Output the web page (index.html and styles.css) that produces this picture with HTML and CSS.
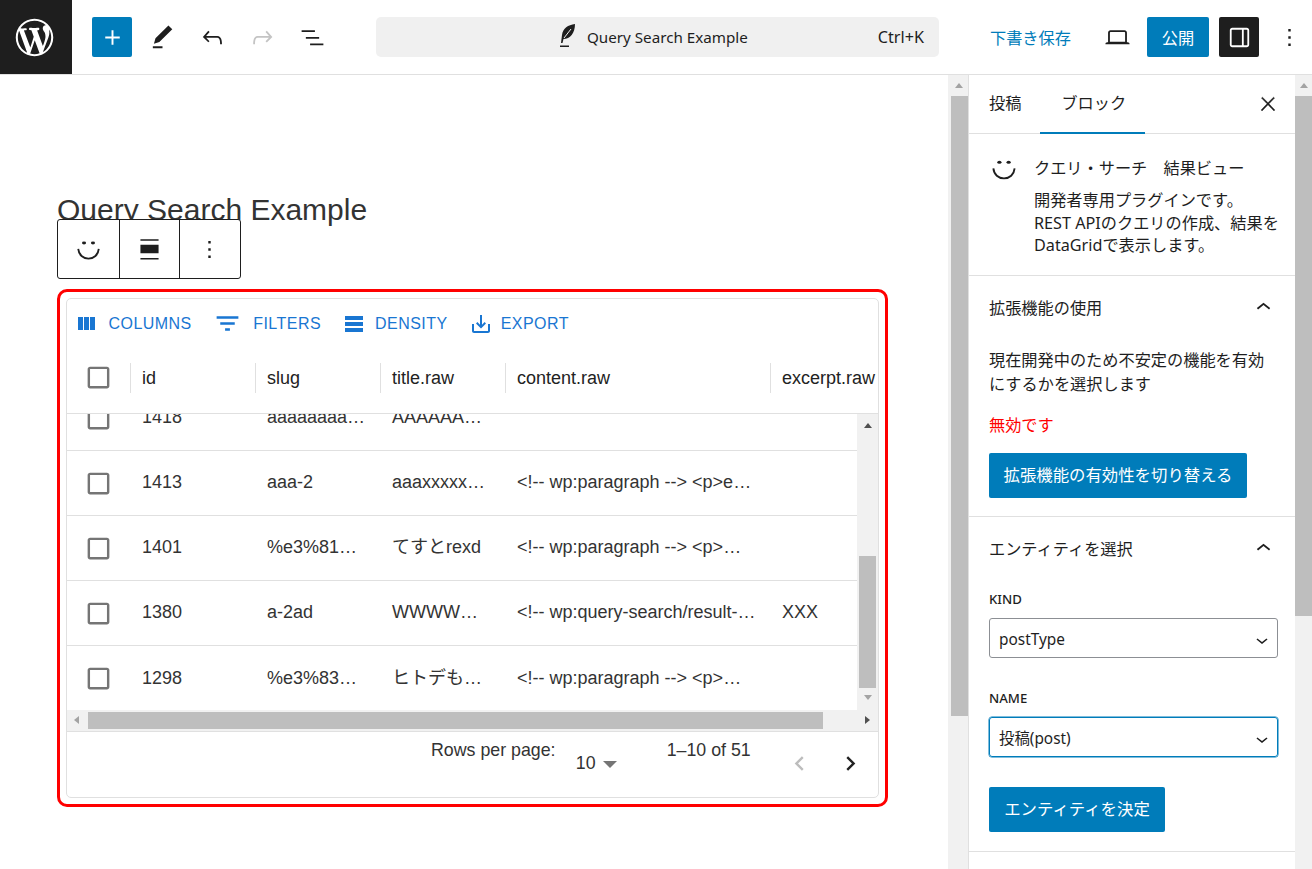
FILE: index.html
```html
<!DOCTYPE html>
<html lang="ja">

<head>
    <meta charset="UTF-8">
    <title>Query Search Example</title>
    <link rel="stylesheet" href="styles.css">
</head>

<body>
    <svg class="defs" width="0" height="0">
        <symbol id="smile" viewBox="0 0 24 24">
            <ellipse cx="8.300" cy="6.600" rx="1.700" ry="1.200" /><ellipse cx="15.700" cy="6.600" rx="1.700" ry="1.200" />
            <path d="M3.500 11.500c.5 5 4 8 8.500 8s8-3 8.500-8" fill="none" stroke="currentColor" stroke-width="1.500" />
        </symbol>
        <symbol id="more" viewBox="0 0 24 24"><path d="M13 19h-2v-2h2v2zm0-6h-2v-2h2v2zm0-6h-2V5h2v2z" /></symbol>
        <symbol id="up" viewBox="0 0 24 24"><path d="M6.500 12.400L12 8l5.500 4.400-.9 1.200L12 10l-4.500 3.600-1-1.200z" /></symbol>
        <symbol id="check" viewBox="0 0 24 24"><path d="M19 5v14H5V5h14m0-2H5c-1.100 0-2 .9-2 2v14c0 1.100.9 2 2 2h14c1.100 0 2-.9 2-2V5c0-1.100-.9-2-2-2z" /></symbol>
        <symbol id="down" viewBox="0 0 24 24"><path d="M17.500 11.600L12 16l-5.500-4.400.9-1.200L12 14l4.500-3.600 1 1.200z" /></symbol>
    </svg>

    <header class="topbar">
        <div class="logo">
            <svg viewBox="-2 -2 24 24" width="45" height="45"><path d="M20 10c0-5.510-4.490-10-10-10C4.480 0 0 4.490 0 10c0 5.520 4.480 10 10 10 5.510 0 10-4.480 10-10zM7.780 15.370L4.370 6.220c.55-.02 1.170-.08 1.170-.08.5-.06.44-1.130-.06-1.110 0 0-1.450.11-2.370.11-.18 0-.37 0-.58-.01C4.120 2.690 6.870 1.110 10 1.110c2.330 0 4.450.87 6.050 2.340-.68-.11-1.650.39-1.650 1.580 0 .74.45 1.360.9 2.100.35.61.55 1.360.55 2.460 0 1.490-1.400 5-1.400 5l-3.030-8.370c.54-.02.82-.17.82-.17.5-.05.44-1.250-.06-1.220 0 0-1.440.12-2.380.12-.87 0-2.330-.12-2.330-.12-.5-.03-.56 1.200-.06 1.220l.92.08 1.260 3.410zM17.410 10c.24-.64.74-1.870.43-4.250.7 1.290 1.050 2.710 1.050 4.250 0 3.290-1.730 6.240-4.400 7.780.97-2.590 1.940-5.200 2.920-7.780zM6.100 18.090C3.120 16.650 1.110 13.530 1.110 10c0-1.300.23-2.480.72-3.590C3.250 10.300 4.670 14.200 6.100 18.090zm4.030-6.630l2.580 6.980c-.86.29-1.760.45-2.710.45-.79 0-1.570-.11-2.290-.33.81-2.380 1.620-4.740 2.420-7.100z" /></svg>
        </div>
        <div class="tools">
            <span class="tool tool-add"><svg viewBox="0 0 24 24" width="29" height="29"><path d="M18 11.200h-5.200V6h-1.600v5.200H6v1.600h5.200V18h1.600v-5.200H18z" /></svg></span>
            <span class="tool"><svg viewBox="0 0 24 24" width="29" height="29"><path d="M20.100 5.100L16.900 2 6.200 12.700l-1.300 4.400 4.500-1.300L20.100 5.100zM4 20.800h8v-1.500H4v1.500z" /></svg></span>
            <span class="tool"><svg viewBox="0 0 24 24" width="29" height="29"><path d="M18.300 11.700c-.6-.6-1.400-.9-2.300-.9H6.700l2.900-3.300-1.100-1-4.500 5L8.500 16l1-1-2.700-2.700H16c.5 0 .9.2 1.300.5 1 1 1 3.400 1 4.500v.3h1.500v-.2c0-1.500 0-4.300-1.500-5.700z" /></svg></span>
            <span class="tool tool-off"><svg viewBox="0 0 24 24" width="29" height="29"><path d="M15.600 6.500l-1.100 1 2.900 3.300H8c-.9 0-1.700.3-2.300.9-1.400 1.500-1.400 4.200-1.400 5.600v.2h1.500v-.3c0-1.100 0-3.500 1-4.500.3-.3.7-.5 1.300-.5h9.200L14.500 15l1.100 1.100 4.600-4.600-4.600-5z" /></svg></span>
            <span class="tool"><svg viewBox="0 0 24 24" width="29" height="29"><path d="M3 6h11v1.500H3V6zm3.500 5.500h11V13h-11v-1.500zM21 17H10v1.500h11V17z" /></svg></span>
        </div>
        <div class="command">
            <div class="command-title">
                <svg viewBox="0 0 24 26" width="24" height="26">
                    <path d="M19 0C12 1 7 4 6 11l-1 8h1.500l1-4C14 15 19 9 19 0z" />
                    <path d="M8 14l7-9" fill="none" stroke="#f0f0f0" />
                    <path d="M4 21.500h9V23H4z" />
                </svg>
                <span>Query Search Example</span>
            </div>
            <span class="command-key">Ctrl+K</span>
        </div>
        <div class="actions">
            <span class="save">下書き保存</span>
            <span class="tool"><svg viewBox="0 0 24 24" width="29" height="29"><path d="M20.500 16h-.7V8c0-1.100-.9-2-2-2H6.200c-1.100 0-2 .9-2 2v8h-.7c-.8 0-1.500.7-1.500 1.500h20c0-.8-.7-1.500-1.500-1.500zM5.700 8c0-.3.2-.5.5-.5h11.600c.3 0 .5.2.5.5v7.600H5.700V8z" /></svg></span>
            <span class="publish">公開</span>
            <span class="tool tool-dark"><svg viewBox="0 0 24 24" width="29" height="29"><path d="M18 4H6c-1.100 0-2 .9-2 2v12c0 1.100.9 2 2 2h12c1.100 0 2-.9 2-2V6c0-1.100-.9-2-2-2zm-4 14.500H6c-.3 0-.5-.2-.5-.5V6c0-.3.2-.5.5-.5h8v13zm4.500-.5c0 .3-.2.5-.5.5h-2.500v-13H18c.3 0 .5.2.5.5v12z" /></svg></span>
            <span class="tool"><svg width="29" height="29"><use href="#more" /></svg></span>
        </div>
    </header>

    <div class="main">
        <section class="editor">
            <div class="canvas">
                <h1 class="post-title">Query Search Example</h1>

                <div class="block-toolbar">
                    <span class="block-btn"><svg width="29" height="29"><use href="#smile" /></svg></span>
                    <span class="block-btn"><svg viewBox="0 0 24 24" width="29" height="29"><path d="M4.500 3.500h15v1.200h-15zM4.500 8h15v7h-15zM4.500 19h15v1.200h-15z" /></svg></span>
                    <span class="block-btn"><svg width="29" height="29"><use href="#more" /></svg></span>
                </div>

                <div class="red-box">
                    <div class="grid">
                        <div class="grid-tools">
                            <span class="grid-tool"><svg viewBox="0 0 24 24" width="24" height="24"><path d="M10 18h5V5h-5v13zm-6 0h5V5H4v13zM16 5v13h5V5h-5z" /></svg>COLUMNS</span>
                            <span class="grid-tool"><svg viewBox="0 0 24 24" width="29" height="29"><path d="M10 18h4v-2h-4v2zM3 6v2h18V6H3zm3 7h12v-2H6v2z" /></svg>FILTERS</span>
                            <span class="grid-tool"><svg viewBox="0 0 24 24" width="24" height="24"><path d="M21 8H3V4h18v4zM21 10H3v4h18v-4zM21 16H3v4h18v-4z" /></svg>DENSITY</span>
                            <span class="grid-tool"><svg viewBox="0 0 24 24" width="24" height="24"><path d="M19 12v7H5v-7H3v7c0 1.100.9 2 2 2h14c1.100 0 2-.9 2-2v-7h-2zm-6 .67l2.590-2.580L17 11.500l-5 5-5-5 1.410-1.410L11 12.670V3h2z" /></svg>EXPORT</span>
                        </div>

                        <div class="grid-head">
                            <span class="cell-check"><svg class="checkbox" width="29" height="29"><use href="#check" /></svg></span>
                            <span class="head-cell">id</span>
                            <span class="head-cell">slug</span>
                            <span class="head-cell">title.raw</span>
                            <span class="head-cell">content.raw</span>
                            <span class="head-cell">excerpt.raw</span>
                        </div>

                        <div class="grid-body">
                            <div class="rows">
                                <div class="rows-inner">
                                    <div class="row">
                                        <span class="cell-check"><svg class="checkbox" width="29" height="29"><use href="#check" /></svg></span>
                                        <span class="cell">1418</span><span class="cell">aaaaaaaaaaaaaa</span><span class="cell">AAAAAAAAAAAA</span><span class="cell"></span><span class="cell"></span>
                                    </div>
                                    <div class="row">
                                        <span class="cell-check"><svg class="checkbox" width="29" height="29"><use href="#check" /></svg></span>
                                        <span class="cell">1413</span><span class="cell">aaa-2</span><span class="cell">aaaxxxxxxxxx</span><span class="cell">&lt;!-- wp:paragraph --&gt; &lt;p&gt;exxxxxxxx</span><span class="cell"></span>
                                    </div>
                                    <div class="row">
                                        <span class="cell-check"><svg class="checkbox" width="29" height="29"><use href="#check" /></svg></span>
                                        <span class="cell">1401</span><span class="cell">%e3%81%a6%e3%81</span><span class="cell">てすとrexd</span><span class="cell">&lt;!-- wp:paragraph --&gt; &lt;p&gt;ててててて</span><span class="cell"></span>
                                    </div>
                                    <div class="row">
                                        <span class="cell-check"><svg class="checkbox" width="29" height="29"><use href="#check" /></svg></span>
                                        <span class="cell">1380</span><span class="cell">a-2ad</span><span class="cell">WWWWWWW</span><span class="cell">&lt;!-- wp:query-search/result-view --&gt;</span><span class="cell">XXX</span>
                                    </div>
                                    <div class="row">
                                        <span class="cell-check"><svg class="checkbox" width="29" height="29"><use href="#check" /></svg></span>
                                        <span class="cell">1298</span><span class="cell">%e3%83%92%e3%83</span><span class="cell">ヒトデものがたり</span><span class="cell">&lt;!-- wp:paragraph --&gt; &lt;p&gt;ヒトデもの</span><span class="cell"></span>
                                    </div>
                                </div>
                            </div>
                            <div class="vbar vbar-grid">
                                <i class="arrow arrow-up"></i>
                                <i class="thumb"></i>
                                <i class="arrow arrow-down"></i>
                            </div>
                        </div>

                        <div class="hbar">
                            <i class="arrow arrow-left"></i>
                            <i class="hthumb"></i>
                            <i class="arrow arrow-right"></i>
                        </div>

                        <div class="grid-foot">
                            <span class="foot-label">Rows per page:</span>
                            <span class="foot-size">10<i class="caret"></i></span>
                            <span class="foot-count">1–10 of 51</span>
                            <span class="foot-nav">
                                <svg class="nav-off" viewBox="0 0 24 24" width="29" height="29"><path d="M15.410 7.410L14 6l-6 6 6 6 1.410-1.410L10.830 12z" /></svg>
                                <svg viewBox="0 0 24 24" width="29" height="29"><path d="M10 6L8.590 7.410 13.170 12l-4.580 4.590L10 18l6-6z" /></svg>
                            </span>
                        </div>
                    </div>
                </div>
            </div>
            <div class="vbar vbar-page vbar-editor">
                <i class="arrow arrow-up arrow-light"></i>
                <i class="thumb"></i>
            </div>
        </section>

        <aside class="sidebar">
            <div class="side-scroll">
                <div class="tabs">
                    <span class="tab">投稿</span>
                    <span class="tab tab-on">ブロック</span>
                    <svg class="tab-close" viewBox="0 0 24 24" width="22" height="22"><path d="M13 11.800l6.100-6.300-1-1-6.100 6.200-6.100-6.200-1 1 6.100 6.300-6.500 6.700 1 1 6.500-6.600 6.500 6.600 1-1z" stroke="currentColor" stroke-width=".5" /></svg>
                </div>

                <div class="block-card">
                    <svg class="card-icon" width="29" height="29"><use href="#smile" /></svg>
                    <div>
                        <h2 class="card-title">クエリ・サーチ　結果ビュー</h2>
                        <p class="card-desc">開発者専用プラグインです。<br>REST APIのクエリの作成、結果を<br>DataGridで表示します。</p>
                    </div>
                </div>

                <div class="panel">
                    <div class="panel-head">拡張機能の使用<svg width="29" height="29"><use href="#up" /></svg></div>
                    <p class="panel-text">現在開発中のため不安定の機能を有効にするかを選択します</p>
                    <p class="panel-off">無効です</p>
                    <span class="btn btn-wide">拡張機能の有効性を切り替える</span>
                </div>

                <div class="panel panel-entity">
                    <div class="panel-head">エンティティを選択<svg width="29" height="29"><use href="#up" /></svg></div>
                    <label class="field-label">KIND</label>
                    <div class="select">postType<svg width="24" height="24"><use href="#down" /></svg></div>
                    <label class="field-label field-gap">NAME</label>
                    <div class="select select-focus">投稿(post)<svg width="24" height="24"><use href="#down" /></svg></div>
                    <span class="btn btn-entity">エンティティを決定</span>
                </div>
            </div>
            <div class="vbar vbar-page vbar-side">
                <i class="arrow arrow-up arrow-light"></i>
                <i class="thumb"></i>
            </div>
        </aside>
    </div>
</body>

</html>
```
FILE: styles.css
```css
* {
    box-sizing: border-box;
    margin: 0;
    padding: 0;
}

html,
body {
    height: 100%;
    overflow: hidden;
}

body {
    display: flex;
    flex-direction: column;
    background: #fff;
    color: #1e1e1e;
    font-family: "Noto Sans", "Noto Sans CJK JP", sans-serif;
    font-size: 16.2px;
}

svg {
    display: block;
    fill: currentColor;
}

.defs {
    position: absolute;
}

i {
    display: block;
}

/* top bar */

.topbar {
    display: flex;
    align-items: center;
    height: 75px;
    flex: none;
    border-bottom: 1px solid #e0e0e0;
}

.logo {
    display: flex;
    align-items: center;
    justify-content: center;
    width: 72px;
    height: 74px;
    padding-right: 3px;
    background: #1e1e1e;
    color: #fff;
}

.tools {
    display: flex;
    gap: 10px;
    margin-left: 20px;
}

.tool {
    display: flex;
    align-items: center;
    justify-content: center;
    width: 40px;
    height: 40px;
    border-radius: 2px;
}

.tool-add {
    background: #007cba;
    color: #fff;
}

.tool-off {
    color: #c4c4c4;
}

.tool-dark {
    background: #1e1e1e;
    color: #fff;
}

.command {
    display: flex;
    align-items: center;
    justify-content: space-between;
    width: 563px;
    height: 40px;
    margin-left: 44px;
    padding: 0 15px 0 180px;
    background: #f0f0f0;
    border-radius: 5px;
    font-size: 15.200px;
}

.command-title {
    display: flex;
    align-items: center;
    gap: 7px;
}

.command-key {
    font-size: 16.200px;
}

.actions {
    display: flex;
    align-items: center;
    margin-left: 51px;
}

.save {
    width: 81px;
    color: #007cba;
    white-space: nowrap;
}

.actions .tool:nth-child(2) {
    margin-left: 26px;
}

.publish {
    display: flex;
    align-items: center;
    justify-content: center;
    width: 62px;
    height: 40px;
    margin: 0 10px 0 10px;
    background: #007cba;
    border-radius: 2px;
    color: #fff;
}

.actions .tool:last-child {
    margin-left: 10px;
}

/* main area */

.main {
    display: flex;
    flex: 1;
    min-height: 0;
}

.editor {
    display: flex;
    flex: 1;
    min-width: 0;
}

.canvas {
    position: relative;
    flex: 1;
    min-width: 0;
    padding: 117px 60px 0 57px;
}

.post-title {
    height: 97px;
    font-family: "Liberation Sans", Arial, sans-serif;
    font-size: 30px;
    font-weight: 400;
    line-height: 36px;
    color: #333;
}

.block-toolbar {
    position: absolute;
    top: 144px;
    left: 57px;
    display: flex;
    height: 60px;
    background: #fff;
    border: 1px solid #1e1e1e;
    border-radius: 3px;
}

.block-btn {
    display: flex;
    align-items: center;
    justify-content: center;
    width: 60.600px;
}

.block-btn + .block-btn {
    border-left: 1px solid #1e1e1e;
}

/* data grid */

.red-box {
    height: 518px;
    padding: 6px;
    border: 3px solid #f00;
    border-radius: 10px;
}

.grid {
    display: flex;
    flex-direction: column;
    height: 100%;
    overflow: hidden;
    border: 1px solid #e0e0e0;
    border-radius: 5px;
    font-family: "Liberation Sans", Arial, "Noto Sans CJK JP", sans-serif;
    font-size: 18px;
    color: #333;
}

.grid-tools {
    display: flex;
    align-items: center;
    gap: 21px;
    height: 49px;
    padding-left: 7px;
    flex: none;
}

.grid-tool {
    display: flex;
    align-items: center;
    gap: 10.500px;
    color: #1976d2;
    font-size: 16px;
    letter-spacing: .46px;
}

.grid-tool:nth-child(2) {
    gap: 11.500px;
}

.grid-tool:nth-child(3) {
    gap: 9px;
}

.grid-tool:nth-child(4) {
    gap: 8px;
}

.grid-head {
    display: grid;
    grid-template-columns: 63px 125px 125px 125px 265px 125px;
    align-items: center;
    height: 66px;
    padding-bottom: 6px;
    flex: none;
    overflow: hidden;
    border-bottom: 1px solid #e0e0e0;
    color: #222;
}

.cell-check {
    display: flex;
    justify-content: center;
    padding-right: 1px;
}

.checkbox {
    color: #757575;
}

.head-cell {
    height: 30px;
    padding-left: 11px;
    border-left: 1px solid #e0e0e0;
    line-height: 30px;
    white-space: nowrap;
}

.grid-body {
    display: flex;
    height: 296px;
    flex: none;
}

.rows {
    flex: 1;
    min-width: 0;
    overflow: hidden;
}

.rows-inner {
    margin-top: -28px;
}

.row {
    display: grid;
    grid-template-columns: 63px 125px 125px 125px 265px 125px;
    align-items: center;
    height: 65px;
    border-bottom: 1px solid #e0e0e0;
}

.row:last-child {
    border-bottom: 0;
}

.cell {
    padding: 0 12px 2px;
    overflow: hidden;
    line-height: 24px;
    white-space: nowrap;
    text-overflow: ellipsis;
}

/* scrollbars */

.vbar {
    display: flex;
    flex-direction: column;
    align-items: center;
    flex: none;
    background: #f1f1f1;
}

.vbar .arrow {
    margin-top: 8px;
}

.thumb {
    width: 17px;
    background: #bebebe;
}

.vbar-grid {
    width: 21px;
}

.vbar-grid .arrow-up {
    margin-top: 9px;
}

.vbar-grid .thumb {
    height: 132px;
    margin-top: 128px;
}

.vbar-grid .arrow-down {
    margin-top: 7px;
}

.vbar-page {
    width: 20px;
}

.vbar-page .thumb {
    margin-top: 8px;
}

.vbar-editor {
    padding-left: 2px;
}

.vbar-editor .thumb {
    height: 620px;
}

.vbar-side {
    width: 17px;
}

.vbar-side .thumb {
    height: 520px;
}

.arrow {
    width: 0;
    height: 0;
    flex: none;
    border: 4.500px solid transparent;
}

.arrow-up {
    border-top: 0;
    border-bottom: 5px solid #505050;
}

.arrow-down {
    border-bottom: 0;
    border-top: 5px solid #a3a3a3;
}

.arrow-light.arrow-up {
    border-bottom-color: #a3a3a3;
}

.arrow-left {
    border-left: 0;
    border-right: 5px solid #a3a3a3;
}

.arrow-right {
    border-right: 0;
    border-left: 5px solid #505050;
}

.hbar {
    display: flex;
    align-items: center;
    justify-content: space-between;
    height: 22px;
    padding: 0 8px 1px 7px;
    flex: none;
    background: #f1f1f1;
    border-bottom: 1px solid #e0e0e0;
}

.hthumb {
    width: 735px;
    height: 17px;
    margin: 0 auto 0 9px;
    background: #bebebe;
}

/* grid footer */

.grid-foot {
    display: flex;
    flex: 1;
    align-items: flex-start;
    padding: 8px 13px 0 364px;
    font-size: 17.800px;
}

.foot-label {
    width: 145px;
    line-height: 20px;
}

.foot-size {
    display: flex;
    align-items: center;
    gap: 7px;
    width: 91px;
    margin-top: 12px;
    line-height: 22px;
}

.caret {
    width: 0;
    height: 0;
    margin-top: 2px;
    border: 7px solid transparent;
    border-top-color: #757575;
    border-bottom: 0;
}

.foot-count {
    width: 118.500px;
    line-height: 20px;
}

.foot-nav {
    display: flex;
    gap: 22px;
    margin-top: 9px;
    color: #222;
}

.nav-off {
    color: #bdbdbd;
}

/* sidebar */

.sidebar {
    display: flex;
    width: 344px;
    flex: none;
    border-left: 1px solid #e0e0e0;
}

.side-scroll {
    flex: 1;
    min-width: 0;
}

.tabs {
    display: flex;
    align-items: stretch;
    height: 59px;
    padding-left: 20px;
    border-bottom: 1px solid #e0e0e0;
}

.tab {
    position: relative;
    padding-right: 19px;
    line-height: 56px;
}

.tab-on {
    padding: 0 19px 0 21px;
}

.tab-on:after {
    content: '';
    position: absolute;
    left: 0;
    right: 0;
    bottom: -1px;
    height: 2px;
    background: #007cba;
}

.tab-close {
    margin: 18px 16px 0 auto;
}

.block-card {
    display: flex;
    gap: 15px;
    height: 142px;
    padding: 20px 10px 0 20px;
    border-bottom: 1px solid #e0e0e0;
}

.card-icon {
    flex: none;
    width: 30px;
    height: 30px;
}

.card-title {
    font-size: 16.200px;
    font-weight: 400;
    line-height: 28px;
    white-space: nowrap;
}

.card-desc {
    margin-top: 7px;
    line-height: 22.500px;
    white-space: nowrap;
}

.panel {
    padding: 0 20px;
    border-bottom: 1px solid #e0e0e0;
    height: 241px;
}

.panel-entity {
    height: 335px;
}

.panel-head {
    display: flex;
    align-items: center;
    justify-content: space-between;
    height: 64px;
    margin-right: -3px;
    padding-bottom: 2px;
}

.panel-text {
    margin-top: 8px;
    line-height: 24px;
}

.panel-off {
    margin-top: 17px;
    color: #f00;
    line-height: 24px;
}

.btn {
    display: flex;
    align-items: center;
    justify-content: center;
    padding-bottom: 3px;
    background: #007cba;
    border-radius: 2px;
    color: #fff;
    font-size: 16.400px;
}

.btn-wide {
    width: 258px;
    height: 45px;
    margin-top: 16px;
}

.btn-entity {
    width: 176px;
    height: 45px;
    margin-top: 30px;
}

.field-label {
    display: block;
    margin-top: 8px;
    font-size: 13.200px;
    font-weight: 500;
    line-height: 20px;
    text-transform: uppercase;
}

.field-gap {
    margin-top: 30px;
}

.select {
    display: flex;
    align-items: center;
    justify-content: space-between;
    width: 289px;
    height: 40px;
    margin-top: 9px;
    padding: 3px 3px 0 9px;
    border: 1px solid #8c8f94;
    border-radius: 3px;
    font-size: 15.400px;
    line-height: 24px;
}

.select-focus {
    border-color: #007cba;
    box-shadow: 0 0 0 .5px #007cba;
}
```
